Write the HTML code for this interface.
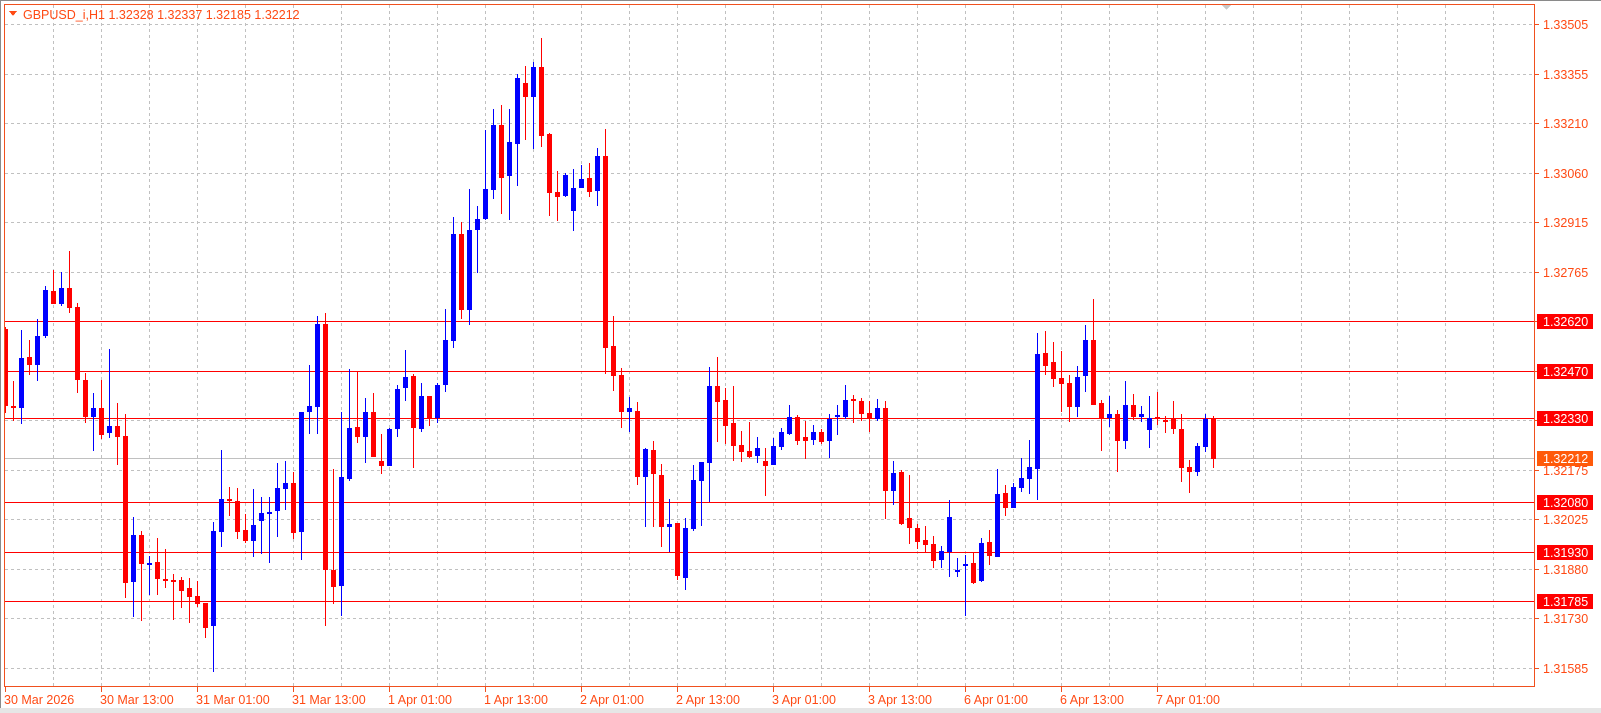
<!DOCTYPE html>
<html><head><meta charset="utf-8"><style>
html,body{margin:0;padding:0;background:#fff;width:1601px;height:713px;overflow:hidden}
svg{display:block}
.r{fill:#ff0000;stroke:#ff0000;stroke-width:1}
.b{fill:#0000ff;stroke:#0000ff;stroke-width:1}
text{font-family:"Liberation Sans",sans-serif;font-size:12.5px}
.pl{fill:#ff4a14}
.bx{fill:#fff}
</style></head><body>
<svg width="1601" height="713" viewBox="0 0 1601 713" shape-rendering="crispEdges">
<rect x="0" y="0" width="1601" height="713" fill="#fff"/>
<rect x="0" y="0" width="1601" height="1" fill="#8a8a8a"/>
<rect x="0" y="0" width="1" height="713" fill="#8a8a8a"/>
<rect x="0" y="708" width="1601" height="5" fill="#e6e6e6"/>
<!-- grid -->
<g stroke="#c0c0c0" stroke-width="1" stroke-dasharray="3,3">
<path d="M53.5 5V687M101.5 5V687M149.5 5V687M197.5 5V687M245.5 5V687M293.5 5V687M341.5 5V687M389.5 5V687M437.5 5V687M485.5 5V687M533.5 5V687M581.5 5V687M629.5 5V687M677.5 5V687M725.5 5V687M773.5 5V687M821.5 5V687M869.5 5V687M917.5 5V687M965.5 5V687M1013.5 5V687M1061.5 5V687M1109.5 5V687M1157.5 5V687M1205.5 5V687M1253.5 5V687M1301.5 5V687M1349.5 5V687M1397.5 5V687M1445.5 5V687M1493.5 5V687"/>
<path d="M5 24.5H1535M5 74.5H1535M5 123.5H1535M5 173.5H1535M5 222.5H1535M5 272.5H1535M5 321.5H1535M5 371.5H1535M5 420.5H1535M5 470.5H1535M5 519.5H1535M5 569.5H1535M5 618.5H1535M5 668.5H1535"/>
</g>
<!-- levels -->
<path d="M5 458.5H1535" stroke="#c0c0c0" stroke-width="1"/>
<path d="M5 321.5H1535M5 371.5H1535M5 418.5H1535M5 502.5H1535M5 552.5H1535M5 601.5H1535" stroke="#ff0000" stroke-width="1"/>
<!-- candles -->
<svg x="5" y="5" width="1530" height="682" viewBox="5 5 1530 682" overflow="hidden">
<path class="r" d="M5.5 327V413M3.5 329.5h4V405.5h-4z"/>
<path class="r" d="M13.5 381V421M11.5 406.5h4V407.5h-4z"/>
<path class="b" d="M21.5 330V424M19.5 358.5h4V407.5h-4z"/>
<path class="r" d="M29.5 340V375M27.5 357.5h4V364.5h-4z"/>
<path class="b" d="M37.5 319V381M35.5 336.5h4V364.5h-4z"/>
<path class="b" d="M45.5 286V338M43.5 290.5h4V335.5h-4z"/>
<path class="r" d="M53.5 270V304M51.5 291.5h4V303.5h-4z"/>
<path class="b" d="M61.5 272V306M59.5 288.5h4V303.5h-4z"/>
<path class="r" d="M69.5 251V313M67.5 288.5h4V307.5h-4z"/>
<path class="r" d="M77.5 303V393M75.5 307.5h4V379.5h-4z"/>
<path class="r" d="M85.5 373V423M83.5 380.5h4V416.5h-4z"/>
<path class="b" d="M93.5 393V451M91.5 408.5h4V416.5h-4z"/>
<path class="r" d="M101.5 380V439M99.5 408.5h4V434.5h-4z"/>
<path class="b" d="M109.5 349V438M107.5 426.5h4V432.5h-4z"/>
<path class="r" d="M117.5 403V465M115.5 426.5h4V436.5h-4z"/>
<path class="r" d="M125.5 414V598M123.5 436.5h4V582.5h-4z"/>
<path class="b" d="M133.5 517V617M131.5 535.5h4V581.5h-4z"/>
<path class="r" d="M141.5 531V621M139.5 535.5h4V563.5h-4z"/>
<path class="b" d="M149.5 556V595M147.5 563.5h4V564.5h-4z"/>
<path class="r" d="M157.5 538V595M155.5 562.5h4V578.5h-4z"/>
<path class="r" d="M165.5 549V588M163.5 579.5h4V580.5h-4z"/>
<path class="r" d="M173.5 574V620M171.5 580.5h4V581.5h-4z"/>
<path class="r" d="M181.5 577V608M179.5 580.5h4V590.5h-4z"/>
<path class="r" d="M189.5 578V623M187.5 588.5h4V596.5h-4z"/>
<path class="r" d="M197.5 581V607M195.5 596.5h4V603.5h-4z"/>
<path class="r" d="M205.5 603V638M203.5 603.5h4V627.5h-4z"/>
<path class="b" d="M213.5 522V672M211.5 531.5h4V625.5h-4z"/>
<path class="b" d="M221.5 450V547M219.5 499.5h4V531.5h-4z"/>
<path class="r" d="M229.5 487V516M227.5 499.5h4V500.5h-4z"/>
<path class="r" d="M237.5 488V539M235.5 501.5h4V531.5h-4z"/>
<path class="r" d="M245.5 514V543M243.5 530.5h4V540.5h-4z"/>
<path class="b" d="M253.5 489V557M251.5 525.5h4V540.5h-4z"/>
<path class="b" d="M261.5 497V554M259.5 513.5h4V520.5h-4z"/>
<path class="b" d="M269.5 497V563M267.5 512.5h4V513.5h-4z"/>
<path class="b" d="M277.5 463V537M275.5 488.5h4V510.5h-4z"/>
<path class="b" d="M285.5 461V510M283.5 483.5h4V488.5h-4z"/>
<path class="r" d="M293.5 472V539M291.5 483.5h4V532.5h-4z"/>
<path class="b" d="M301.5 412V560M299.5 412.5h4V531.5h-4z"/>
<path class="b" d="M309.5 365V434M307.5 406.5h4V411.5h-4z"/>
<path class="b" d="M317.5 316V434M315.5 324.5h4V406.5h-4z"/>
<path class="r" d="M325.5 313V626M323.5 324.5h4V569.5h-4z"/>
<path class="r" d="M333.5 469V604M331.5 570.5h4V586.5h-4z"/>
<path class="b" d="M341.5 412V616M339.5 477.5h4V585.5h-4z"/>
<path class="b" d="M349.5 369V481M347.5 428.5h4V478.5h-4z"/>
<path class="r" d="M357.5 371V443M355.5 427.5h4V436.5h-4z"/>
<path class="b" d="M365.5 398V463M363.5 412.5h4V436.5h-4z"/>
<path class="r" d="M373.5 393V457M371.5 412.5h4V456.5h-4z"/>
<path class="r" d="M381.5 434V474M379.5 461.5h4V465.5h-4z"/>
<path class="b" d="M389.5 428V466M387.5 429.5h4V465.5h-4z"/>
<path class="b" d="M397.5 385V437M395.5 389.5h4V428.5h-4z"/>
<path class="b" d="M405.5 350V401M403.5 377.5h4V387.5h-4z"/>
<path class="r" d="M413.5 374V468M411.5 376.5h4V427.5h-4z"/>
<path class="b" d="M421.5 383V432M419.5 396.5h4V428.5h-4z"/>
<path class="r" d="M429.5 396V426M427.5 396.5h4V417.5h-4z"/>
<path class="b" d="M437.5 383V423M435.5 385.5h4V417.5h-4z"/>
<path class="b" d="M445.5 309V392M443.5 340.5h4V384.5h-4z"/>
<path class="b" d="M453.5 217V348M451.5 234.5h4V340.5h-4z"/>
<path class="r" d="M461.5 222V319M459.5 234.5h4V309.5h-4z"/>
<path class="b" d="M469.5 189V325M467.5 230.5h4V309.5h-4z"/>
<path class="b" d="M477.5 206V273M475.5 219.5h4V229.5h-4z"/>
<path class="b" d="M485.5 130V220M483.5 189.5h4V218.5h-4z"/>
<path class="b" d="M493.5 109V199M491.5 125.5h4V189.5h-4z"/>
<path class="r" d="M501.5 105V214M499.5 125.5h4V177.5h-4z"/>
<path class="b" d="M509.5 109V220M507.5 142.5h4V175.5h-4z"/>
<path class="b" d="M517.5 74V186M515.5 78.5h4V143.5h-4z"/>
<path class="r" d="M525.5 66V140M523.5 83.5h4V96.5h-4z"/>
<path class="b" d="M533.5 62V149M531.5 67.5h4V96.5h-4z"/>
<path class="r" d="M541.5 38V147M539.5 67.5h4V135.5h-4z"/>
<path class="r" d="M549.5 133V216M547.5 134.5h4V192.5h-4z"/>
<path class="r" d="M557.5 171V221M555.5 192.5h4V196.5h-4z"/>
<path class="b" d="M565.5 173V197M563.5 175.5h4V195.5h-4z"/>
<path class="b" d="M573.5 169V231M571.5 188.5h4V210.5h-4z"/>
<path class="b" d="M581.5 165V188M579.5 179.5h4V187.5h-4z"/>
<path class="r" d="M589.5 163V197M587.5 178.5h4V191.5h-4z"/>
<path class="b" d="M597.5 148V206M595.5 156.5h4V190.5h-4z"/>
<path class="r" d="M605.5 129V374M603.5 156.5h4V347.5h-4z"/>
<path class="r" d="M613.5 316V391M611.5 346.5h4V375.5h-4z"/>
<path class="r" d="M621.5 368V428M619.5 375.5h4V411.5h-4z"/>
<path class="b" d="M629.5 397V432M627.5 408.5h4V411.5h-4z"/>
<path class="r" d="M637.5 402V485M635.5 411.5h4V476.5h-4z"/>
<path class="b" d="M645.5 448V527M643.5 449.5h4V476.5h-4z"/>
<path class="r" d="M653.5 441V527M651.5 450.5h4V473.5h-4z"/>
<path class="r" d="M661.5 464V547M659.5 475.5h4V526.5h-4z"/>
<path class="b" d="M669.5 499V552M667.5 524.5h4V526.5h-4z"/>
<path class="r" d="M677.5 523V580M675.5 523.5h4V575.5h-4z"/>
<path class="b" d="M685.5 518V590M683.5 528.5h4V577.5h-4z"/>
<path class="b" d="M693.5 465V531M691.5 480.5h4V528.5h-4z"/>
<path class="b" d="M701.5 462V526M699.5 462.5h4V480.5h-4z"/>
<path class="b" d="M709.5 367V502M707.5 386.5h4V462.5h-4z"/>
<path class="r" d="M717.5 357V442M715.5 386.5h4V401.5h-4z"/>
<path class="r" d="M725.5 388V444M723.5 400.5h4V425.5h-4z"/>
<path class="r" d="M733.5 386V461M731.5 423.5h4V445.5h-4z"/>
<path class="r" d="M741.5 431V462M739.5 445.5h4V451.5h-4z"/>
<path class="r" d="M749.5 422V458M747.5 451.5h4V456.5h-4z"/>
<path class="b" d="M757.5 437V463M755.5 448.5h4V455.5h-4z"/>
<path class="r" d="M765.5 448V496M763.5 461.5h4V465.5h-4z"/>
<path class="b" d="M773.5 438V465M771.5 446.5h4V464.5h-4z"/>
<path class="b" d="M781.5 428V450M779.5 432.5h4V446.5h-4z"/>
<path class="b" d="M789.5 405V435M787.5 417.5h4V433.5h-4z"/>
<path class="r" d="M797.5 415V445M795.5 417.5h4V440.5h-4z"/>
<path class="r" d="M805.5 421V459M803.5 437.5h4V440.5h-4z"/>
<path class="b" d="M813.5 425V445M811.5 432.5h4V439.5h-4z"/>
<path class="r" d="M821.5 429V444M819.5 432.5h4V441.5h-4z"/>
<path class="b" d="M829.5 414V458M827.5 419.5h4V440.5h-4z"/>
<path class="b" d="M837.5 405V435M835.5 415.5h4V416.5h-4z"/>
<path class="b" d="M845.5 385V419M843.5 400.5h4V416.5h-4z"/>
<path class="r" d="M853.5 395V423M851.5 399.5h4V400.5h-4z"/>
<path class="r" d="M861.5 398V421M859.5 401.5h4V413.5h-4z"/>
<path class="r" d="M869.5 401V432M867.5 413.5h4V417.5h-4z"/>
<path class="b" d="M877.5 399V421M875.5 408.5h4V418.5h-4z"/>
<path class="r" d="M885.5 401V519M883.5 408.5h4V490.5h-4z"/>
<path class="b" d="M893.5 461V505M891.5 473.5h4V490.5h-4z"/>
<path class="r" d="M901.5 470V525M899.5 472.5h4V523.5h-4z"/>
<path class="r" d="M909.5 475V544M907.5 518.5h4V527.5h-4z"/>
<path class="r" d="M917.5 524V549M915.5 528.5h4V541.5h-4z"/>
<path class="r" d="M925.5 526V552M923.5 540.5h4V544.5h-4z"/>
<path class="r" d="M933.5 536V568M931.5 544.5h4V560.5h-4z"/>
<path class="b" d="M941.5 546V568M939.5 551.5h4V559.5h-4z"/>
<path class="b" d="M949.5 500V577M947.5 517.5h4V551.5h-4z"/>
<path class="b" d="M957.5 558V577M955.5 570.5h4V571.5h-4z"/>
<path class="b" d="M965.5 555V616M963.5 564.5h4V565.5h-4z"/>
<path class="r" d="M973.5 552V584M971.5 563.5h4V582.5h-4z"/>
<path class="b" d="M981.5 538V582M979.5 543.5h4V580.5h-4z"/>
<path class="r" d="M989.5 530V565M987.5 542.5h4V555.5h-4z"/>
<path class="b" d="M997.5 469V557M995.5 494.5h4V556.5h-4z"/>
<path class="r" d="M1005.5 485V516M1003.5 493.5h4V507.5h-4z"/>
<path class="b" d="M1013.5 483V508M1011.5 487.5h4V507.5h-4z"/>
<path class="b" d="M1021.5 458V492M1019.5 478.5h4V487.5h-4z"/>
<path class="b" d="M1029.5 440V494M1027.5 467.5h4V478.5h-4z"/>
<path class="b" d="M1037.5 333V500M1035.5 354.5h4V468.5h-4z"/>
<path class="r" d="M1045.5 331V375M1043.5 353.5h4V365.5h-4z"/>
<path class="r" d="M1053.5 342V387M1051.5 362.5h4V378.5h-4z"/>
<path class="r" d="M1061.5 351V412M1059.5 378.5h4V383.5h-4z"/>
<path class="r" d="M1069.5 375V422M1067.5 383.5h4V406.5h-4z"/>
<path class="b" d="M1077.5 366V417M1075.5 377.5h4V406.5h-4z"/>
<path class="b" d="M1085.5 325V392M1083.5 340.5h4V375.5h-4z"/>
<path class="r" d="M1093.5 299V405M1091.5 340.5h4V404.5h-4z"/>
<path class="r" d="M1101.5 400V451M1099.5 403.5h4V417.5h-4z"/>
<path class="b" d="M1109.5 396V427M1107.5 414.5h4V417.5h-4z"/>
<path class="r" d="M1117.5 410V472M1115.5 414.5h4V440.5h-4z"/>
<path class="b" d="M1125.5 381V449M1123.5 405.5h4V440.5h-4z"/>
<path class="r" d="M1133.5 394V420M1131.5 405.5h4V416.5h-4z"/>
<path class="b" d="M1141.5 406V422M1139.5 414.5h4V416.5h-4z"/>
<path class="b" d="M1149.5 396V448M1147.5 418.5h4V429.5h-4z"/>
<path class="r" d="M1157.5 392V425M1155.5 417.5h4V418.5h-4z"/>
<path class="r" d="M1165.5 416V433M1163.5 420.5h4V421.5h-4z"/>
<path class="r" d="M1173.5 401V434M1171.5 419.5h4V428.5h-4z"/>
<path class="r" d="M1181.5 414V482M1179.5 429.5h4V467.5h-4z"/>
<path class="r" d="M1189.5 460V493M1187.5 467.5h4V471.5h-4z"/>
<path class="b" d="M1197.5 443V476M1195.5 446.5h4V471.5h-4z"/>
<path class="b" d="M1205.5 414V452M1203.5 419.5h4V446.5h-4z"/>
<path class="r" d="M1213.5 416V468M1211.5 418.5h4V458.5h-4z"/>
</svg>
<!-- frame -->
<rect x="4.5" y="4.5" width="1530" height="682" fill="none" stroke="#f0501e" stroke-width="1"/>
<polygon points="1222,5 1231,5 1226.5,10" fill="#c8c8c8"/>
<!-- price ticks -->
<path d="M1535 24.5h4M1535 74.5h4M1535 123.5h4M1535 173.5h4M1535 222.5h4M1535 272.5h4M1535 321.5h4M1535 371.5h4M1535 420.5h4M1535 470.5h4M1535 519.5h4M1535 569.5h4M1535 618.5h4M1535 668.5h4" stroke="#f0501e"/>
<g class="pl">
<text x="1543" y="29">1.33505</text>
<text x="1543" y="79">1.33355</text>
<text x="1543" y="128">1.33210</text>
<text x="1543" y="178">1.33060</text>
<text x="1543" y="227">1.32915</text>
<text x="1543" y="277">1.32765</text>
<text x="1543" y="475">1.32175</text>
<text x="1543" y="524">1.32025</text>
<text x="1543" y="574">1.31880</text>
<text x="1543" y="623">1.31730</text>
<text x="1543" y="673">1.31585</text>
</g>
<g fill="#ff0000">
<rect x="1537" y="314" width="56" height="15"/>
<rect x="1537" y="364" width="56" height="15"/>
<rect x="1537" y="411" width="56" height="15"/>
<rect x="1537" y="495" width="56" height="15"/>
<rect x="1537" y="545" width="56" height="15"/>
<rect x="1537" y="594" width="56" height="15"/>
</g>
<rect x="1537" y="451" width="56" height="15" fill="#ff5a0a"/>
<g class="bx">
<text x="1543" y="326">1.32620</text>
<text x="1543" y="376">1.32470</text>
<text x="1543" y="423">1.32330</text>
<text x="1543" y="463">1.32212</text>
<text x="1543" y="507">1.32080</text>
<text x="1543" y="557">1.31930</text>
<text x="1543" y="606">1.31785</text>
</g>
<!-- time ticks -->
<path d="M5.5 687v5M101.5 687v5M197.5 687v5M293.5 687v5M389.5 687v5M485.5 687v5M581.5 687v5M677.5 687v5M773.5 687v5M869.5 687v5M965.5 687v5M1061.5 687v5M1157.5 687v5" stroke="#f0501e"/>
<g class="pl">
<text x="4" y="704">30 Mar 2026</text>
<text x="100" y="704">30 Mar 13:00</text>
<text x="196" y="704">31 Mar 01:00</text>
<text x="292" y="704">31 Mar 13:00</text>
<text x="388" y="704">1 Apr 01:00</text>
<text x="484" y="704">1 Apr 13:00</text>
<text x="580" y="704">2 Apr 01:00</text>
<text x="676" y="704">2 Apr 13:00</text>
<text x="772" y="704">3 Apr 01:00</text>
<text x="868" y="704">3 Apr 13:00</text>
<text x="964" y="704">6 Apr 01:00</text>
<text x="1060" y="704">6 Apr 13:00</text>
<text x="1156" y="704">7 Apr 01:00</text>
</g>
<!-- header -->
<polygon points="9,11 17,11 13,16" fill="#ff4a14"/>
<text x="23" y="19" class="pl">GBPUSD_i,H1  1.32328 1.32337 1.32185 1.32212</text>
</svg>
</body></html>
